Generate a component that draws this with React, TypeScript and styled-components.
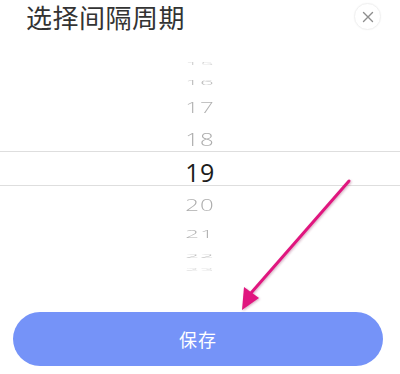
import React from 'react';
import styled, {createGlobalStyle} from "styled-components";

const GlobalStyle = createGlobalStyle`
    html, body {
        margin: 0;
        padding: 0;
        background: #ffffff;
    }
`

type Row = { value: number, height: number, scale: number, shift: number, tone: string }

const rowsAbove: Row[] = [
    {value: 15, height: 16, scale: 0.15, shift: 0, tone: '#d0d0d0'},
    {value: 16, height: 20, scale: 0.3, shift: 0, tone: '#bdbdbd'},
    {value: 17, height: 30, scale: 0.62, shift: 0, tone: '#b2b2b2'},
    {value: 18, height: 29, scale: 0.75, shift: 4, tone: '#adadad'},
]

const rowsBelow: Row[] = [
    {value: 20, height: 34, scale: 0.68, shift: 4, tone: '#adadad'},
    {value: 21, height: 26, scale: 0.45, shift: 2, tone: '#b2b2b2'},
    {value: 22, height: 18, scale: 0.25, shift: 2, tone: '#bdbdbd'},
    {value: 23, height: 12, scale: 0.12, shift: 0, tone: '#d0d0d0'},
]

const renderRow = (row: Row) => (
    <PickerRow key={row.value} $height={row.height} $shift={row.shift}>
        <RowText $scale={row.scale} $tone={row.tone}>{row.value}</RowText>
    </PickerRow>
)

export default function App() {
    return (
        <>
            <GlobalStyle/>
            <Sheet>
                <Header>
                    <Title>选择间隔周期</Title>
                    <CloseButton aria-label="close">
                        <svg width="12" height="12" viewBox="0 0 12 12">
                            <path d="M1.5 1.5 L10.5 10.5 M10.5 1.5 L1.5 10.5" stroke="#8e8e8e" strokeWidth="1.4"
                                  strokeLinecap="round"/>
                        </svg>
                    </CloseButton>
                </Header>

                <Picker>
                    {rowsAbove.map(renderRow)}
                    <SelectedRow>
                        <SelectedText>19</SelectedText>
                    </SelectedRow>
                    {rowsBelow.map(renderRow)}
                </Picker>

                <SaveButton>保存</SaveButton>

                <Annotation width="400" height="374" viewBox="0 0 400 374">
                    <defs>
                        <filter id="soft" x="-10%" y="-10%" width="120%" height="120%">
                            <feDropShadow dx="1" dy="1" stdDeviation="1" floodColor="#8a2a5a" floodOpacity="0.35"/>
                        </filter>
                    </defs>
                    <g filter="url(#soft)">
                        <line x1="349" y1="181" x2="251" y2="293" stroke="#e0177f" strokeWidth="3"
                              strokeLinecap="round"/>
                        <polygon points="242,310 244,287 259,298" fill="#e0177f"/>
                    </g>
                </Annotation>
            </Sheet>
        </>
    );
}

const Sheet = styled.div`
    position: relative;
    width: 400px;
    height: 374px;
    overflow: hidden;
    background: #ffffff;
    font-family: "Noto Sans CJK SC", "Noto Sans", sans-serif;
`

const Header = styled.div`
    display: flex;
    align-items: center;
    justify-content: space-between;
    height: 33px;
    padding: 0 19px 0 26px;
`

const Title = styled.h1`
    margin: 0;
    font-size: 26px;
    font-weight: 400;
    line-height: 33px;
    color: #333333;
    letter-spacing: 0.5px;
`

const CloseButton = styled.button`
    display: flex;
    align-items: center;
    justify-content: center;
    width: 27px;
    height: 27px;
    padding: 0;
    border: 1px solid #f1f1f1;
    border-radius: 50%;
    background: #ffffff;
    box-shadow: 0 0 2px rgba(0, 0, 0, 0.04);
`

const Picker = styled.div`
    display: flex;
    flex-direction: column;
    margin-top: 23px;
    font-family: "Open Sans", Roboto, sans-serif;
`

const PickerRow = styled.div<{ $height: number, $shift: number }>`
    display: flex;
    align-items: center;
    justify-content: center;
    height: ${p => p.$height}px;
    padding-top: ${p => p.$shift}px;
    box-sizing: border-box;
`

const RowText = styled.span<{ $scale: number, $tone: string }>`
    display: inline-block;
    font-size: 24px;
    font-weight: 300;
    line-height: 1;
    color: ${p => p.$tone};
    letter-spacing: 1px;
    transform: scaleY(${p => p.$scale});
`

const SelectedRow = styled.div`
    display: flex;
    align-items: center;
    justify-content: center;
    height: 35px;
    padding-top: 8px;
    box-sizing: border-box;
    border-top: 1px solid #dedede;
    border-bottom: 1px solid #dedede;
`

const SelectedText = styled.span`
    font-size: 25px;
    font-weight: 400;
    line-height: 1;
    color: #1c1c1c;
    letter-spacing: 0.5px;
`

const SaveButton = styled.button`
    display: flex;
    align-items: center;
    justify-content: center;
    width: 370px;
    height: 54px;
    margin: 36px 0 0 13px;
    padding: 0;
    border: none;
    border-radius: 27px;
    background: #7593f8;
    color: #ffffff;
    font-family: "Noto Sans CJK SC", "Noto Sans", sans-serif;
    font-size: 18px;
    letter-spacing: 1px;
`

const Annotation = styled.svg`
    position: absolute;
    left: 0;
    top: 0;
    pointer-events: none;
`
